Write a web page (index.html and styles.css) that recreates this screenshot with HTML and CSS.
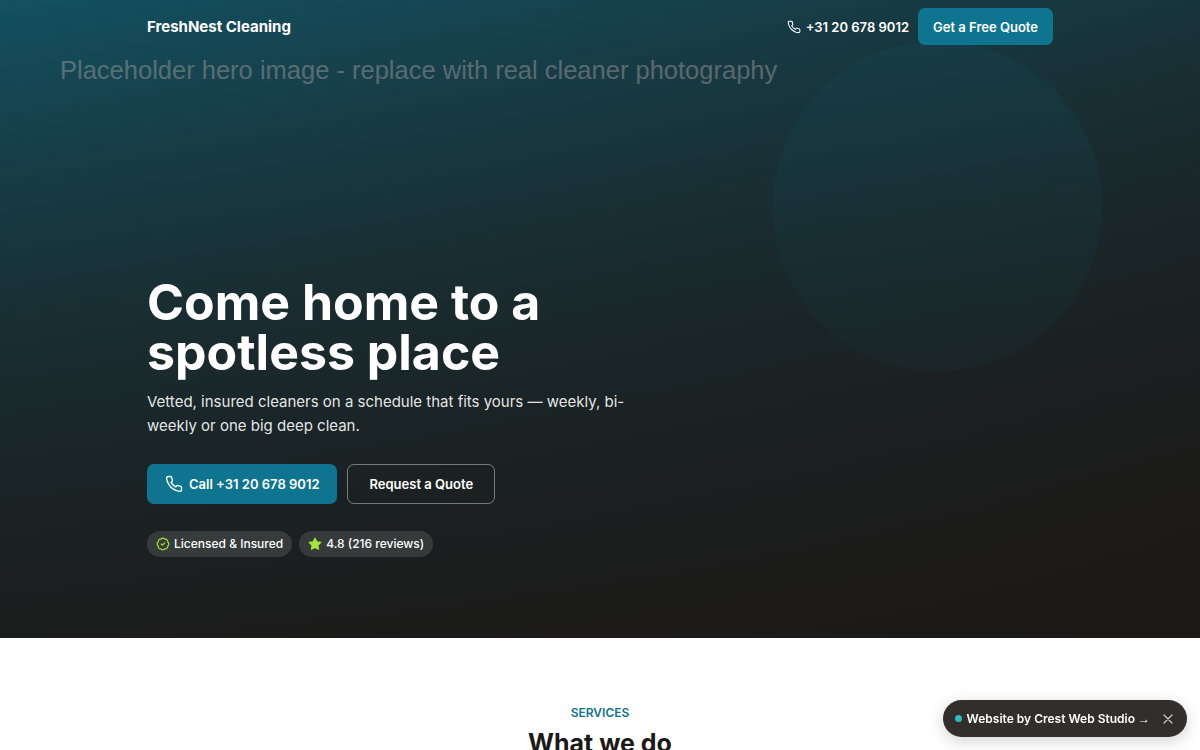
FILE: index.html
```html
<!DOCTYPE html>
<html lang="en">
<head>
<meta charset="utf-8">
<meta name="viewport" content="width=device-width, initial-scale=1">
<title>FreshNest Cleaning</title>
<link rel="stylesheet" href="styles.css">
</head>
<body>
<svg class="sprite" aria-hidden="true">
  <symbol id="phone" viewBox="0 0 24 24"><path fill="none" stroke="currentColor" stroke-width="1.8" stroke-linecap="round" stroke-linejoin="round" d="M22 16.92v3a2 2 0 0 1-2.18 2 19.79 19.79 0 0 1-8.63-3.07 19.5 19.5 0 0 1-6-6 19.79 19.79 0 0 1-3.07-8.67A2 2 0 0 1 4.11 2h3a2 2 0 0 1 2 1.72 12.84 12.84 0 0 0 .7 2.81 2 2 0 0 1-.45 2.11L8.09 9.91a16 16 0 0 0 6 6l1.27-1.27a2 2 0 0 1 2.11-.45 12.84 12.84 0 0 0 2.81.7A2 2 0 0 1 22 16.92z"/></symbol>
</svg>
<main>
  <section class="hero">
    <div class="backdrop">
      <svg viewBox="0 0 1600 900" preserveAspectRatio="xMidYMid slice" aria-hidden="true">
        <defs>
          <linearGradient id="fade" x1="0" y1="0" x2="1" y2="1">
            <stop offset="0" stop-color="#0e7490"/>
            <stop offset="1" stop-color="#1c1917"/>
          </linearGradient>
        </defs>
        <rect width="1600" height="900" fill="url(#fade)"/>
        <circle cx="1250" cy="300" r="220" fill="#0e7490" fill-opacity=".25"/>
        <text x="80" y="130">Placeholder hero image - replace with real cleaner photography</text>
      </svg>
    </div>
    <header class="topbar container">
      <a class="brand" href="#">FreshNest Cleaning</a>
      <nav class="topnav">
        <a class="tel" href="tel:+31206789012"><svg class="icon-tel" aria-hidden="true"><use href="#phone"/></svg>+31 20 678 9012</a>
        <a class="btn btn-primary btn-small" href="#quote">Get a Free Quote</a>
      </nav>
    </header>
    <div class="hero-content container">
      <h1>Come home to a spotless place</h1>
      <p class="lead">Vetted, insured cleaners on a schedule that fits yours — weekly, bi-weekly or one big deep clean.</p>
      <div class="actions">
        <a class="btn btn-primary" href="tel:+31206789012"><svg class="icon-call" aria-hidden="true"><use href="#phone"/></svg>Call +31 20 678 9012</a>
        <a class="btn btn-outline" href="#quote">Request a Quote</a>
      </div>
      <ul class="badges">
        <li><svg viewBox="0 0 24 24" fill="none" stroke="currentColor" stroke-width="2" stroke-linecap="round" stroke-linejoin="round" aria-hidden="true"><path d="M3.85 8.62a4 4 0 0 1 4.78-4.77 4 4 0 0 1 6.74 0 4 4 0 0 1 4.78 4.78 4 4 0 0 1 0 6.74 4 4 0 0 1-4.77 4.78 4 4 0 0 1-6.75 0 4 4 0 0 1-4.78-4.77 4 4 0 0 1 0-6.76Z"/><path d="m9 12 2 2 4-4"/></svg>Licensed &amp; Insured</li>
        <li><svg viewBox="0 0 24 24" fill="currentColor" stroke="currentColor" stroke-width="2" stroke-linejoin="round" aria-hidden="true"><path d="m12 2 3.09 6.26L22 9.27l-5 4.87 1.18 6.88L12 17.77l-6.18 3.25L7 14.14 2 9.27l6.91-1.01z"/></svg>4.8 (216 reviews)</li>
      </ul>
    </div>
  </section>
  <section class="services container" id="services">
    <p class="eyebrow">SERVICES</p>
    <h2>What we do</h2>
  </section>
</main>
<aside class="credit">
  <a href="#studio"><span class="dot"></span>Website by Crest Web Studio <span class="arrow">→</span></a>
  <button type="button" aria-label="Dismiss"><svg viewBox="0 0 10 10" stroke="currentColor" stroke-width="1.2" stroke-linecap="round" aria-hidden="true"><path d="m1 1 8 8M9 1 1 9"/></svg></button>
</aside>
</body>
</html>
```
FILE: styles.css
```css
*, *::before, *::after { box-sizing: border-box; }
body {
  margin: 0;
  background: #fff;
  color: #1c1917;
  font-family: "Inter", "Liberation Sans", sans-serif;
}
h1, h2, p, ul { margin: 0; padding: 0; }
a { color: inherit; text-decoration: none; }
.sprite { position: absolute; width: 0; height: 0; }
.container { width: 100%; max-width: 960px; margin: 0 auto; padding: 0 27px; }

.hero {
  position: relative;
  display: flex;
  flex-direction: column;
  justify-content: space-between;
  min-height: 85vh;
  color: #fff;
}
.backdrop {
  position: absolute;
  inset: 0;
  z-index: -1;
  overflow: hidden;
}
.backdrop svg { display: block; width: 100%; height: 100%; }
.backdrop text {
  font: 34px "Liberation Sans", Arial, sans-serif;
  fill: rgba(255, 255, 255, .5);
}
.backdrop::after {
  content: "";
  position: absolute;
  inset: 0;
  background: linear-gradient(to bottom, rgba(28, 25, 23, .38), rgba(28, 25, 23, .68) 50%, rgba(28, 25, 23, .92));
}

.topbar { display: flex; align-items: center; justify-content: space-between; padding-top: 8px; }
.brand { font-size: 15px; font-weight: 700; }
.topnav { display: flex; align-items: center; gap: 9px; }
.tel { display: flex; align-items: center; gap: 5px; font-size: 13px; font-weight: 600; }
.icon-tel { width: 14px; height: 14px; }
.icon-call { width: 18px; height: 18px; }

.btn {
  display: inline-flex;
  align-items: center;
  justify-content: center;
  gap: 6px;
  height: 40px;
  padding: 0 17px;
  border: 1px solid transparent;
  border-radius: 7px;
  font-size: 13px;
  font-weight: 600;
  white-space: nowrap;
}
.btn-primary { background: #0e7490; }
.btn-small { height: 37px; padding: 0 14px; }
.btn-outline { border-color: rgba(255, 255, 255, .4); padding: 0 21px; }

.hero-content { padding-bottom: 81px; }
h1 { max-width: 520px; font-size: 50px; line-height: 50px; font-weight: 700; }
.lead { max-width: 480px; margin-top: 13px; font-size: 15px; line-height: 24px; color: rgba(255, 255, 255, .9); }
.actions { display: flex; gap: 10px; margin-top: 26px; }
.badges { display: flex; gap: 7px; margin-top: 27px; list-style: none; }
.badges li {
  display: flex;
  align-items: center;
  gap: 4px;
  height: 26px;
  padding: 0 9px;
  border-radius: 13px;
  background: rgba(255, 255, 255, .12);
  font-size: 12px;
  font-weight: 500;
}
.badges svg { width: 14px; height: 14px; color: #a3e635; }

.services { padding-top: 67px; padding-bottom: 67px; text-align: center; }
.eyebrow { font-size: 12px; line-height: 16px; font-weight: 600; color: #0e7490; }
h2 { margin-top: 7px; font-size: 25px; line-height: 30px; font-weight: 700; }

.credit {
  position: fixed;
  right: 13px;
  bottom: 13px;
  display: flex;
  align-items: center;
  gap: 8px;
  height: 37px;
  padding: 0 9px 0 12px;
  border-radius: 19px;
  background: #322e2c;
  color: #fff;
  box-shadow: 0 4px 16px rgba(0, 0, 0, .18);
}
.credit a { display: flex; align-items: center; gap: 5px; font-size: 12px; font-weight: 600; white-space: nowrap; }
.arrow { margin-left: -2px; font-family: "Liberation Sans", sans-serif; }
.dot { width: 7px; height: 7px; border-radius: 50%; background: #2bbdc0; }
.credit button { display: grid; place-items: center; width: 20px; height: 20px; padding: 0; border: 0; background: none; color: #cfcac6; }
.credit button svg { width: 10px; height: 10px; }
```
